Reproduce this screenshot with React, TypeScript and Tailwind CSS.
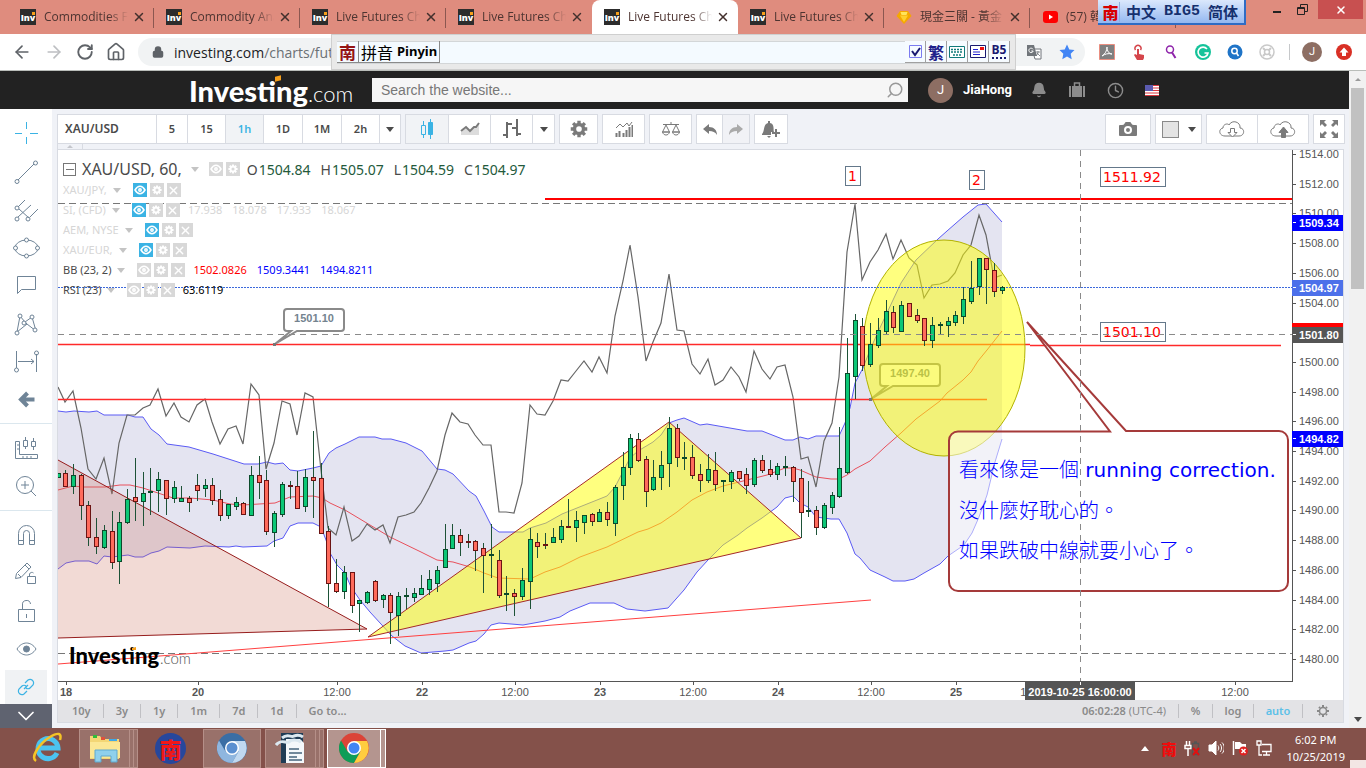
import type { ReactNode } from 'react';
import {
  ArrowLeft,
  ArrowRight,
  Bell,
  Camera,
  ChevronDown,
  Clock,
  House,
  Lock,
  RotateCw,
  Search,
  X,
} from 'lucide-react';

type Candle = [number, number, number, number, 0 | 1];

// high, body top, body bottom, low, 1 = up / 0 = down
const candles: Candle[] = [
  [473, 473, 477, 477, 1], [470, 473, 486, 486, 0], [464, 475, 486, 493, 1], [474, 475, 505, 519, 0],
  [501, 505, 537, 545, 0], [518, 537, 546, 553, 0], [525, 530, 547, 548, 1], [511, 531, 562, 568, 0],
  [512, 522, 561, 583, 1], [489, 499, 522, 523, 1], [458, 497, 501, 520, 0], [472, 493, 501, 525, 1],
  [468, 491, 492, 514, 1], [472, 479, 490, 511, 1], [480, 480, 498, 514, 0], [481, 487, 498, 502, 1],
  [486, 498, 501, 501, 1], [496, 498, 502, 511, 0], [474, 485, 490, 500, 0], [479, 485, 488, 496, 1],
  [478, 485, 500, 504, 0], [490, 499, 515, 520, 0], [504, 504, 515, 518, 1], [497, 502, 506, 509, 1],
  [502, 503, 514, 514, 0], [466, 475, 515, 515, 1], [456, 475, 482, 498, 0], [470, 480, 531, 534, 0],
  [511, 513, 532, 546, 1], [482, 484, 514, 516, 1], [481, 485, 486, 498, 0], [471, 486, 508, 508, 0],
  [469, 477, 506, 511, 1], [431, 477, 480, 517, 0], [463, 478, 533, 533, 0], [526, 531, 583, 606, 0],
  [559, 583, 591, 592, 0], [566, 572, 591, 598, 1], [572, 572, 605, 612, 0], [600, 600, 603, 631, 1],
  [591, 592, 602, 603, 1], [580, 581, 600, 601, 0], [594, 595, 599, 607, 1], [593, 595, 612, 643, 0],
  [592, 596, 615, 635, 1], [588, 595, 596, 608, 1], [588, 593, 597, 601, 1], [575, 588, 594, 594, 1],
  [570, 579, 589, 594, 1], [566, 570, 583, 591, 1], [524, 549, 567, 567, 1], [524, 535, 548, 548, 1],
  [529, 535, 542, 555, 0], [534, 541, 542, 547, 0], [540, 541, 550, 570, 0], [543, 548, 555, 592, 0],
  [524, 554, 555, 577, 1], [550, 560, 595, 597, 0], [576, 593, 594, 610, 1], [589, 593, 596, 615, 0],
  [568, 580, 596, 599, 1], [528, 539, 581, 608, 1], [533, 542, 546, 557, 0], [533, 544, 545, 548, 0],
  [528, 537, 542, 542, 1], [520, 526, 539, 542, 1], [499, 526, 527, 527, 0], [511, 520, 527, 541, 1],
  [515, 515, 522, 533, 1], [513, 514, 521, 525, 0], [509, 512, 521, 521, 1], [502, 512, 519, 525, 0],
  [485, 487, 523, 535, 1], [452, 467, 485, 499, 1], [434, 438, 467, 474, 1], [433, 439, 460, 461, 0],
  [456, 459, 491, 506, 0], [460, 477, 489, 490, 1], [451, 465, 477, 489, 1], [417, 428, 463, 486, 1],
  [424, 428, 457, 466, 0], [442, 457, 458, 469, 1], [445, 457, 475, 478, 0], [464, 474, 480, 491, 0],
  [454, 469, 480, 482, 1], [452, 470, 484, 490, 0], [480, 480, 481, 491, 1], [470, 472, 481, 488, 1],
  [471, 471, 478, 480, 0], [468, 474, 485, 493, 0], [458, 460, 484, 486, 1], [455, 460, 470, 472, 0],
  [460, 469, 474, 476, 0], [463, 466, 474, 479, 1], [456, 466, 467, 475, 1], [466, 467, 481, 501, 0],
  [469, 478, 512, 537, 0], [481, 510, 511, 516, 1], [506, 510, 527, 534, 0], [503, 505, 527, 528, 1],
  [492, 495, 507, 513, 1], [427, 468, 496, 497, 1], [338, 373, 472, 473, 1], [314, 320, 376, 398, 1],
  [318, 326, 365, 370, 0], [323, 344, 364, 366, 1], [318, 330, 345, 347, 1], [300, 311, 331, 333, 1],
  [306, 312, 327, 332, 0], [301, 305, 331, 331, 1], [303, 303, 316, 316, 0], [309, 315, 320, 322, 0],
  [318, 318, 340, 345, 0], [317, 325, 340, 347, 1], [322, 324, 325, 334, 1], [317, 321, 325, 336, 1],
  [311, 315, 322, 325, 1], [287, 299, 316, 323, 1], [261, 288, 301, 303, 1], [258, 258, 286, 294, 1],
  [258, 258, 269, 303, 0], [263, 270, 291, 296, 0], [286, 287, 290, 293, 1],
];

const rsi = [
  387, 402, 391, 428, 469, 479, 458, 494, 443, 415, 415, 408, 405, 389, 416, 403, 417, 422, 405, 399,
  422, 444, 429, 426, 444, 384, 395, 469, 443, 401, 404, 435, 393, 397, 470, 528, 535, 507, 541, 536,
  524, 530, 525, 543, 517, 515, 512, 503, 488, 471, 435, 413, 422, 424, 435, 445, 445, 512, 512, 513,
  483, 405, 414, 415, 401, 380, 381, 371, 361, 372, 357, 373, 316, 281, 245, 297, 361, 342, 323, 274,
  330, 331, 364, 374, 359, 385, 380, 367, 377, 392, 351, 369, 379, 367, 365, 397, 459, 457, 487, 441,
  423, 377, 252, 204, 280, 262, 250, 234, 259, 240, 258, 265, 298, 285, 284, 281, 273, 255, 245, 215,
  235, 278, 275,
];

const upperBand =
  '58,411 66,412 74,411 89,412 97,411 104,415 128,415 135,417 143,417 151,429 159,435 167,444 189,447 213,454 244,464 258,464 267,462 275,464 283,463 290,470 298,471 313,468 321,466 329,453 336,448 345,444 359,437 375,437 382,439 391,439 406,443 422,451 437,469 445,470 453,474 469,491 476,496 484,511 492,527 499,532 523,532 530,528 546,523 562,514 577,508 607,496 615,487 630,458 638,451 653,442 661,435 669,423 677,420 684,418 700,425 707,424 747,431 762,431 785,440 793,440 800,437 808,439 816,436 839,436 845,423 850,408 855,383 863,368 870,350 878,332 901,283 916,260 938,239 947,231 955,224 963,217 978,205 986,204 1002,222';
const lowerBand =
  '58,569 66,563 75,561 89,561 97,564 104,556 112,557 128,555 135,557 143,557 151,553 159,551 167,547 190,548 205,546 229,547 236,546 243,547 267,546 274,541 283,538 290,526 298,523 313,523 321,527 326,540 330,553 337,565 345,573 351,587 360,600 370,612 392,636 405,646 421,653 445,651 453,650 469,643 476,641 484,634 491,625 499,623 523,625 545,621 560,617 570,611 590,603 614,603 627,609 645,611 668,608 684,590 697,572 708,560 723,545 738,535 747,528 762,518 777,507 785,498 793,496 800,503 808,507 816,517 831,519 839,519 847,533 855,554 860,558 870,570 885,577 893,581 905,581 914,579 924,573 940,564 948,556 964,545 972,533 979,517 987,495 995,462 1002,439';
const middleBand =
  '58,490 73,486 83,487 105,487 120,485 130,485 143,488 158,493 173,498 190,498 213,500 230,504 243,505 275,503 290,497 313,496 322,498 330,503 345,510 370,525 390,537 421,552 437,560 453,562 470,567 484,573 498,578 530,579 545,572 560,567 570,562 580,557 607,547 638,532 648,529 661,523 677,512 692,500 707,492 723,486 747,480 767,475 785,468 793,468 800,470 816,477 831,479 839,479 847,475 855,469 870,461 885,447 901,433 916,419 940,401 947,393 963,380 971,372 978,361 987,350 1002,331';

const barX = (i: number) => Math.round(57.5 + 7.74 * i);

// 1502.00 is left out, the crosshair tag sits in its place
const priceTicks = Array.from({ length: 18 }, (_, i) => ({
  price: 1514 - i * 2,
  y: Math.round(154 + i * 29.7),
})).filter(({ price }) => price !== 1502);

const timeTicks: [number, string][] = [
  [66, '18'], [198, '20'], [337, '12:00'], [422, '22'], [515, '12:00'], [600, '23'], [693, '12:00'],
  [778, '24'], [871, '12:00'], [956, '25'], [1034, '12:00'], [1235, '12:00'],
];

const tabs = [
  { title: 'Commodities Fu', icon: 'inv' },
  { title: 'Commodity Ana', icon: 'inv' },
  { title: 'Live Futures Ch', icon: 'inv' },
  { title: 'Live Futures Ch', icon: 'inv' },
  { title: 'Live Futures Ch', icon: 'inv', active: true },
  { title: 'Live Futures Ch', icon: 'inv' },
  { title: '現金三關 - 黃金', icon: 'gem' },
  { title: '(57) 韓', icon: 'tube' },
];

const legendRows = [
  { name: 'XAU/JPY,', values: [] },
  { name: 'SI, (CFD)', values: ['17.938', '18.078', '17.933', '18.067'] },
  { name: 'AEM, NYSE', values: [] },
  { name: 'XAU/EUR,', values: [] },
];

function Caret({ className = 'text-[#4a4a4a]' }: { className?: string }) {
  return (
    <svg viewBox="0 0 8 5" className={`h-[5px] w-2 shrink-0 ${className}`} fill="currentColor">
      <path d="M0 0h8L4 5z" />
    </svg>
  );
}

function GearShape({ className }: { className: string }) {
  return (
    <svg viewBox="0 0 24 24" className={className} fill="none" stroke="currentColor">
      <circle cx="12" cy="12" r="6" strokeWidth="4.5" />
      <path
        strokeWidth="4.5"
        d="M12 1v4M12 19v4M1 12h4M19 12h4M4.200 4.200l2.900 2.900M16.900 16.900l2.900 2.900M4.200 19.800l2.900-2.900M16.900 7.100l2.900-2.900"
      />
    </svg>
  );
}

function TabIcon({ kind }: { kind: string }) {
  if (kind === 'gem') {
    return (
      <svg viewBox="0 0 16 16" className="size-4 shrink-0">
        <path d="M4 2h8l3.500 5L8 15 .5 7z" fill="#f5a800" />
        <path d="M4.500 3h7l-1 3h-5z" fill="#ffe45c" />
        <path d="M4 6.500h8L8 13z" fill="#ffd02e" />
      </svg>
    );
  }
  if (kind === 'tube') {
    return (
      <svg viewBox="0 0 16 16" className="size-4 shrink-0">
        <rect x="1" y="2" width="15" height="12" rx="3" fill="#f00" />
        <path d="M7 5.500v5l4-2.500z" fill="#fff" />
      </svg>
    );
  }
  return (
    <span className="relative flex size-4 shrink-0 items-center justify-center bg-[#2c2c2c] text-[9px] font-black leading-none text-white [font-family:'Open_Sans',sans-serif]">
      Inv
      <span className="absolute right-px top-[3px] size-[3px] bg-[#f7a01b]" />
    </span>
  );
}

function BrowserTabs() {
  return (
    <div className="flex h-[34px] items-stretch overflow-hidden bg-[#df8c7e] pl-2">
      {tabs.map((tab, index) => (
        <div
          key={index}
          className={`relative flex w-[146px] shrink-0 items-center pl-3 pr-[7px] ${
            tab.active ? 'rounded-t-lg bg-white' : ''
          }`}
        >
          <TabIcon kind={tab.icon} />
          <span className="ml-2 w-[86px] shrink-0 whitespace-nowrap text-[12px] text-[#4d3431] [font-family:'Open_Sans','Noto_Sans_CJK_TC',sans-serif] [mask-image:linear-gradient(to_right,black_75%,transparent_98%)]">
            {tab.title}
          </span>
          <button type="button" aria-label="Close tab" className="ml-[2px] shrink-0 text-[#43302d]">
            <X size={14} strokeWidth={2.500} />
          </button>
          {!tab.active && index !== 3 && (
            <span className="absolute right-0 top-2 h-5 w-px bg-[#8b5750]" />
          )}
        </div>
      ))}
      <div className="ml-auto flex items-start">
        <button type="button" aria-label="Minimize" className="mr-4 mt-[11px] h-[2px] w-2 bg-[#222]" />
        <button type="button" aria-label="Restore" className="mr-[10px] mt-1">
          <svg viewBox="0 0 11 11" className="size-[11px]" fill="none" stroke="#222">
            <path d="M3.500 3V.5h7v7H8" />
            <path d="M.5 3.500h7v7h-7zM.5 4.500h7" />
          </svg>
        </button>
        <button
          type="button"
          aria-label="Close"
          className="mr-[3px] flex h-[19px] w-[45px] items-center justify-center bg-[#c85050] text-white"
        >
          <X size={12} strokeWidth={3} />
        </button>
      </div>
    </div>
  );
}

function AddressBar() {
  return (
    <div className="flex h-[37px] items-center border-b border-[#b9bdb9] bg-white pl-3 pr-[14px] text-[#5f6368]">
      <div className="flex items-center gap-3">
        <button type="button" aria-label="Back"><ArrowLeft size={20} /></button>
        <button type="button" aria-label="Forward" className="text-[#bdbfc2]"><ArrowRight size={20} /></button>
        <button type="button" aria-label="Reload"><RotateCw size={18} strokeWidth={2.500} /></button>
        <button type="button" aria-label="Home"><House size={20} /></button>
      </div>
      <div className="ml-3 flex h-7 flex-1 items-center rounded-full bg-[#f1f3f4] pl-[14px] pr-[10px]">
        <Lock size={12} strokeWidth={3} fill="currentColor" />
        <span className="ml-[10px] flex-1 text-[14px] text-[#202124] [font-family:'Open_Sans',sans-serif]">
          investing.com<span className="text-[#6b7075]">/charts/futures-charts</span>
        </span>
        <svg viewBox="0 0 16 16" className="mr-[17px] size-4">
          <path d="M6 5h9v10H9z" fill="#fff" stroke="#70757a" />
          <path d="M1 1h7l3 11H1z" fill="#70757a" />
          <path d="M7 5.300A2.200 2.200 0 1 0 7.200 7H5.300" fill="none" stroke="#fff" />
          <path d="M10 8h4M12 7v1c0 2-1 3-2 4M11 9l3 3" fill="none" stroke="#70757a" strokeWidth=".8" />
        </svg>
        <svg viewBox="0 0 16 16" className="size-4">
          <path d="M8 .5l2.300 4.900 5.200.7-3.800 3.700 1 5.400L8 12.600l-4.700 2.600 1-5.400L.5 6.100l5.200-.7z" fill="#4285f4" />
        </svg>
      </div>
      <div className="ml-[14px] flex items-center gap-4">
        <svg viewBox="0 0 16 16" className="size-4">
          <path d="M.5.5h15v15H.5z" fill="#808080" stroke="#ea8e80" />
          <path d="M3 12c3-2 5-5 5-9 0 4 2 7 5 7-4-1-7 0-10 2z" fill="none" stroke="#fff" />
        </svg>
        <svg viewBox="0 0 16 16" className="size-4" fill="#d5454b">
          <path d="M6 5h2v5l5 1v3l-1 2H6l-3-5 1-1 2 1z" />
          <path d="M4.500 6a3 3 0 1 1 5 0" fill="none" stroke="#d5454b" strokeWidth="1.500" />
        </svg>
        <svg viewBox="0 0 16 16" className="size-4" fill="none" stroke="#8e24aa" strokeWidth="1.500">
          <circle cx="7" cy="5.500" r="3.500" />
          <path d="M9 8.500l3.500 5.500" strokeWidth="2" />
        </svg>
        <svg viewBox="0 0 16 16" className="size-4">
          <circle cx="8" cy="8" r="8" fill="#15c39a" />
          <path d="M12 5a5 5 0 1 0 1 4H9.500" fill="none" stroke="#fff" strokeWidth="1.600" />
        </svg>
        <svg viewBox="0 0 16 16" className="size-4">
          <circle cx="8" cy="8" r="7.500" fill="#1f74c7" />
          <circle cx="7.500" cy="7" r="2.700" fill="none" stroke="#fff" strokeWidth="1.500" />
          <path d="M9.500 9l2 3" stroke="#fff" strokeWidth="1.500" />
        </svg>
        <svg viewBox="0 0 16 16" className="size-4" fill="none" stroke="#c9c9c9">
          <circle cx="8" cy="8" r="7" strokeWidth="1.500" />
          <path d="M4 4l8 8M12 4l-8 8" strokeWidth="2" />
          <circle cx="8" cy="8" r="2.500" fill="#fff" strokeWidth="1.500" />
        </svg>
      </div>
      <span className="ml-[14px] h-4 w-px bg-[#c6c8ca]" />
      <span className="ml-3 flex size-5 items-center justify-center rounded-full bg-[#8d6e63] text-[11px] text-white [font-family:Roboto,sans-serif]">
        J
      </span>
      <svg viewBox="0 0 16 16" className="ml-[14px] size-4">
        <circle cx="8" cy="8" r="8" fill="#d93025" />
        <path d="M8 3.500l4.500 5H10V12H6V8.500H3.500z" fill="#fff" />
      </svg>
    </div>
  );
}

// Floating input method bars that sit above the browser window
function InputMethodBars() {
  const keyClass =
    'flex h-[22px] w-[21px] items-center justify-center border-b border-r border-[#a0a0a0] bg-[#f6fbff]';
  return (
    <>
      <div className="absolute left-[331px] right-[350px] top-[34px] z-10 flex h-9 items-center border border-[#cfcfcf] bg-[#e9e9e9] px-[5px]">
        <div className="flex h-[23px] flex-1 items-center border-y border-[#d3d6d8] bg-[#f4faff]">
          <span className="flex size-[22px] items-center justify-center border-b border-r border-[#8a8a8a] text-[17px] font-bold leading-none text-[#941414] [font-family:'Noto_Sans_CJK_TC',sans-serif]">
            南
          </span>
          <span className="flex h-[22px] items-center gap-1 border-b border-r border-[#8a8a8a] px-[2px] text-[16px] leading-none text-black [font-family:'Noto_Sans_CJK_SC',sans-serif]">
            拼音
            <b className="text-[13px] [font-family:'Noto_Sans',sans-serif]">Pinyin</b>
          </span>
          <div className="ml-auto flex">
            <button type="button" aria-label="Enable" className={keyClass}>
              <svg viewBox="0 0 13 13" className="size-[13px]" fill="none">
                <path d="M.5.5h12v12H.5z" stroke="#7b7bf0" />
                <path d="M3 6l3 4 5-7" stroke="#191970" strokeWidth="2" />
              </svg>
            </button>
            <button type="button" className={`${keyClass} text-[16px] font-bold leading-none text-[#20208a] [font-family:'Noto_Sans_CJK_TC',sans-serif]`}>
              繁
            </button>
            <button type="button" aria-label="Keyboard" className={keyClass}>
              <svg viewBox="0 0 16 12" className="h-3 w-4">
                <path d="M.5.5h15v11H.5z" fill="#fff" stroke="#117a7a" />
                <path d="M2 3.500h12M2 6h12M4 9h8" stroke="#117a7a" strokeWidth="1.500" strokeDasharray="2 1" />
              </svg>
            </button>
            <button type="button" aria-label="Mail" className={keyClass}>
              <svg viewBox="0 0 16 14" className="h-[14px] w-4">
                <path d="M.5.5h15v12H.5z" fill="#fff" stroke="#191970" />
                <path d="M3 4.500h5M3 7h7M3 9.500h7" stroke="#2323d0" />
                <path d="M10 2h4v3h-4z" fill="#e11" />
              </svg>
            </button>
            <button type="button" className={`${keyClass} flex-col text-[12px] font-bold leading-none text-[#191970] [font-family:'Open_Sans',sans-serif]`}>
              B5
              <span className="mt-px w-[14px] border-b-2 border-dotted border-[#191970]" />
            </button>
          </div>
        </div>
      </div>
      <div className="absolute right-[120px] top-0 z-10 flex h-[25px] w-[148px] items-center border-b-2 border-r-2 border-[#2f6cc4] bg-linear-to-b from-[#dbe8fc] to-[#94b8f0] pl-1">
        <span className="flex w-[18px] justify-center border-r border-[#8fb0e0] text-[16px] font-black leading-5 text-[#d80000] [font-family:'Noto_Sans_CJK_TC',sans-serif]">
          南
        </span>
        <span className="flex flex-1 items-center justify-center gap-2 text-[15px] font-bold leading-none text-[#16306e] [font-family:'Noto_Sans_CJK_SC',sans-serif]">
          <span>中文</span>
          <span className="[font-family:'Liberation_Mono',monospace]">BIG5</span>
          <span>简体</span>
        </span>
      </div>
    </>
  );
}

function SiteHeader() {
  return (
    <header className="flex h-[38px] items-center bg-[#222] pl-[189px] text-white">
      <a href="#" className="relative flex w-[183px] items-baseline leading-none">
        <span className="text-[29px] font-black [font-family:Lato,sans-serif]">Investing</span>
        <span className="text-[22px] font-light [font-family:Lato,sans-serif]">.com</span>
        <span className="absolute left-[86px] top-0 h-[5px] w-[6px] -skew-y-12 bg-[#f7a01b]" />
      </a>
      <div className="flex h-6 flex-1 items-center bg-[#f6f6f6] pl-[9px] pr-1">
        <input
          type="text"
          aria-label="Search the website"
          placeholder="Search the website..."
          className="h-6 min-w-0 flex-1 bg-transparent text-[14px] text-[#333] outline-none [font-family:'Liberation_Sans',sans-serif] placeholder:text-[#777]"
        />
        <Search size={18} className="-scale-x-100 text-[#999]" />
      </div>
      <div className="flex w-[441px] shrink-0 items-center pl-5">
        <span className="flex size-[25px] items-center justify-center rounded-full bg-[#8d6e63] text-[13px] [font-family:Roboto,sans-serif]">
          J
        </span>
        <a href="#" className="ml-[10px] w-[68px] text-[13px] font-bold [font-family:Roboto,sans-serif]">
          JiaHong
        </a>
        <button type="button" aria-label="Alerts" className="text-[#8c8c8c]">
          <Bell size={16} fill="currentColor" />
        </button>
        <button type="button" aria-label="Portfolio" className="ml-[21px]">
          <svg viewBox="0 0 18 16" className="h-4 w-[18px]" fill="#8c8c8c">
            <path d="M1 4h2v11H1zM15 4h2v11h-2zM4 4h10v11H4z" />
            <path d="M6.500 4V1h5v3" fill="none" stroke="#8c8c8c" strokeWidth="1.500" />
          </svg>
        </button>
        <button type="button" aria-label="History" className="ml-[21px] text-[#8c8c8c]">
          <Clock size={17} />
        </button>
        <svg viewBox="0 0 14 11" className="ml-[21px] h-[11px] w-[14px]">
          <path d="M0 0h14v11H0z" fill="#fff" />
          <path d="M0 .5h14M0 3h14M0 5.500h14M0 8h14M0 10.500h14" stroke="#d9363e" strokeWidth="1.200" />
          <path d="M0 0h8v6H0z" fill="#5b5bb0" />
        </svg>
      </div>
    </header>
  );
}

const drawTools: { label: string; art: ReactNode }[] = [
  { label: 'Crosshair', art: <path stroke="#3bb3e4" d="M13.500 2v7M13.500 17v7M2 13.500h7M17 13.500h8" /> },
  {
    label: 'Trend line',
    art: (<><path d="M5 22L21 6" /><circle cx="4" cy="23.500" r="2" /><circle cx="22.500" cy="5" r="2" /></>),
  },
  {
    label: 'Pitchfork',
    art: (
      <>
        <path d="M5 11l7-7M6 13l10 9M5 21L18 9M17 21l8-8" />
        <circle cx="4" cy="12" r="2" /><circle cx="4" cy="23" r="2" /><circle cx="15" cy="23" r="2" />
      </>
    ),
  },
  {
    label: 'Ellipse',
    art: (
      <>
        <ellipse cx="13.500" cy="14" rx="11.500" ry="8" />
        <g fill="#fff">
          <circle cx="2.500" cy="14" r="2" /><circle cx="24.500" cy="14" r="2" />
          <circle cx="13.500" cy="6" r="2" /><circle cx="13.500" cy="22" r="2" />
        </g>
      </>
    ),
  },
  { label: 'Callout', art: <path d="M4.500 4.500h18v13h-14l-4 4z" /> },
  {
    label: 'Pattern',
    art: (
      <>
        <path d="M4 22L7 6l5 6 7-5 4 14-9-7zM12 12l2 2" />
        <g fill="#fff">
          <circle cx="4" cy="23" r="2" /><circle cx="7" cy="6" r="2" /><circle cx="11" cy="13" r="2" />
          <circle cx="19" cy="7" r="2" /><circle cx="22" cy="20" r="2" />
        </g>
      </>
    ),
  },
  {
    label: 'Forecast',
    art: (
      <>
        <path d="M3.500 3v17M23.500 6v18M5 13.500h16M18 11l3 2.500-3 2.500" />
        <circle cx="3.500" cy="22" r="2" /><circle cx="23.500" cy="5" r="2" />
      </>
    ),
  },
  {
    label: 'Back',
    art: <path d="M14.500 7L8 13.500l6.500 6.500M9 13.500h12.500" stroke="#6f8497" strokeWidth="4" />,
  },
];

const viewTools: { label: string; art: ReactNode }[] = [
  {
    label: 'Measure',
    art: <path d="M2.500 6.500h4v13h18v4h-22zM4 10h2M4 14h2M10 21v2M14 21v2M18 21v2M12.500 2v3M12.500 12v2M10.500 5.500h4v6h-4zM20.500 3v3M20.500 12v3M18.500 6.500h4v5h-4z" />,
  },
  {
    label: 'Zoom in',
    art: (<><circle cx="12" cy="12" r="8.500" /><path d="M18 18l5 5M8 12h8M12 8v8" /></>),
  },
];

const lockTools: { label: string; art: ReactNode }[] = [
  {
    label: 'Magnet',
    art: <path d="M5.500 22.500v-11a8 8 0 0 1 16 0v11h-5v-11a3 3 0 0 0-6 0v11zM5.500 18.500h5M16.500 18.500h5" />,
  },
  {
    label: 'Stay in drawing mode',
    art: <path d="M2.500 18.500l1-5L14 3l4 4L8 17.500zM5 14l3 3M12 5l4 4M14.500 16.500h8v7h-8zM16.500 16v-2a2.500 2.500 0 0 1 4-1" />,
  },
  {
    label: 'Lock all',
    art: <path d="M5.500 11.500h16v12h-16zM9.500 11V7a4 4 0 0 1 8-1M13.500 16v4" />,
  },
  {
    label: 'Hide all',
    art: (<><path d="M4 13c5-8 14-8 19 0-5 8-14 8-19 0z" /><circle cx="13.500" cy="13" r="3" fill="#6f8497" /></>),
  },
];

function ToolButton({ label, art }: { label: string; art: ReactNode }) {
  return (
    <button type="button" aria-label={label} className="flex h-[38px] w-full items-center justify-center">
      <svg viewBox="0 0 27 27" className="size-[27px]" fill="none" stroke="#6f8497">
        {art}
      </svg>
    </button>
  );
}

function DrawingToolbar() {
  return (
    <aside className="flex w-[52px] shrink-0 flex-col bg-white pt-[5px]">
      {drawTools.map((tool) => <ToolButton key={tool.label} {...tool} />)}
      <hr className="my-[5px] border-[#dbe7ee]" />
      {viewTools.map((tool) => <ToolButton key={tool.label} {...tool} />)}
      <hr className="my-[5px] border-[#dbe7ee]" />
      {lockTools.map((tool) => <ToolButton key={tool.label} {...tool} />)}
      <button
        type="button"
        aria-label="Sync drawings"
        className="mx-[5px] mt-[2px] flex h-[34px] items-center justify-center bg-[#f0f2f4]"
      >
        <svg viewBox="0 0 18 18" className="size-[18px]" fill="none" stroke="#3bb3e4" strokeWidth="1.200">
          <path d="M7 11l4-4M8 5l3-3c3-2 7 1 5 5l-3 3c-1 1-3 1-4 0M10 13l-3 3c-3 2-7-1-5-5l3-3c1-1 3-1 4 0" />
        </svg>
      </button>
      <button type="button" aria-label="More tools" className="flex h-6 items-center justify-center bg-[#5f6370] text-white">
        <ChevronDown size={28} strokeWidth={1.500} />
      </button>
    </aside>
  );
}

function ToolGroup({ children }: { children: ReactNode }) {
  return <div className="flex h-[30px] divide-x divide-[#d8dbe2] border border-[#d8dbe2] bg-white">{children}</div>;
}

const cell = 'flex items-center justify-center text-[#7a7a7a]';

const intervals = [
  { label: '5', width: 'w-[31px]' },
  { label: '15', width: 'w-[38px]' },
  { label: '1h', width: 'w-[38px]' },
  { label: '1D', width: 'w-[39px]' },
  { label: '1M', width: 'w-[39px]' },
  { label: '2h', width: 'w-[38px]' },
];

function ChartToolbar() {
  return (
    <div className="flex h-[35px] gap-1 pr-1 pt-[5px] [font-family:'Noto_Sans',sans-serif]">
      <ToolGroup>
        <button type="button" className="w-[99px] pl-[7px] text-left text-[12px] font-semibold text-[#4a4a4a]">
          XAU/USD
        </button>
        {intervals.map(({ label, width }) => (
          <button
            key={label}
            type="button"
            className={`${width} text-[11px] font-semibold ${
              label === '1h' ? 'bg-[#f1f3f6] text-[#3bb3e4]' : 'text-[#4a4a4a]'
            }`}
          >
            {label}
          </button>
        ))}
        <button type="button" aria-label="Intervals" className={`${cell} w-5`}><Caret /></button>
      </ToolGroup>
      <ToolGroup>
        <button type="button" aria-label="Candles" className={`${cell} w-[43px] bg-[#f1f3f6]`}>
          <svg viewBox="0 0 14 20" className="h-5 w-[14px]" fill="none" stroke="#3bb3e4">
            <path d="M3.500 2v4M3.500 16v3M1.500 6.500h4v9h-4z" />
            <path d="M10.500 0v20M8.500 3.500h4v12h-4z" fill="#3bb3e4" />
          </svg>
        </button>
        <button type="button" aria-label="Area" className={`${cell} w-[42px]`}>
          <svg viewBox="0 0 20 14" className="h-[14px] w-5">
            <path d="M1 10l5-4 4 4 9-8v11H1z" fill="#dcdcdc" />
            <path d="M1 9l5-4 4 4 4-4h2l3-4" fill="none" stroke="#7a7a7a" strokeWidth="2" />
          </svg>
        </button>
        <button type="button" aria-label="Bars" className={`${cell} w-[42px]`}>
          <svg viewBox="0 0 18 20" className="h-5 w-[18px]" fill="none" stroke="#6a6a6a" strokeWidth="2">
            <path d="M4 3v16M0 16h4M4 5h5M14 0v17M9 9h5M14 15h4" />
          </svg>
        </button>
        <button type="button" aria-label="Chart types" className={`${cell} w-[21px]`}><Caret /></button>
      </ToolGroup>
      <ToolGroup>
        <button type="button" aria-label="Settings" className={`${cell} w-[37px]`}><GearShape className="size-[18px]" /></button>
      </ToolGroup>
      <ToolGroup>
        <button type="button" aria-label="Indicators" className={`${cell} w-[41px]`}>
          <svg viewBox="0 0 18 16" className="h-4 w-[18px]" fill="none" stroke="currentColor">
            <path d="M1.500 12v4M4.500 10v6M8.500 12v4M11.500 9v7M14.500 6v10M17.500 4v12" strokeWidth="2" />
            <path d="M1 7l4-4 3 3 4-4 2 3 3-4" />
          </svg>
        </button>
      </ToolGroup>
      <ToolGroup>
        <button type="button" aria-label="Compare" className={`${cell} w-[41px]`}>
          <svg viewBox="0 0 18 15" className="h-[15px] w-[18px]" fill="none" stroke="currentColor">
            <path d="M1 2.500h16M4 3l-3.500 7h7zM14 3l-3.500 7h7zM9 0v3" />
            <path d="M.5 10c1 4 6 4 7 0zM10.500 10c1 4 6 4 7 0z" />
          </svg>
        </button>
      </ToolGroup>
      <ToolGroup>
        <button type="button" aria-label="Undo" className={`${cell} w-[26px]`}>
          <svg viewBox="0 0 14 11" className="h-[11px] w-[14px]" fill="currentColor"><path d="M0 5l6-5v3c5 0 8 3 8 8-2-3-4-4-8-4v3z" /></svg>
        </button>
        <button type="button" aria-label="Redo" className={`${cell} w-[26px] bg-[#f1f2f6]`}>
          <svg viewBox="0 0 14 11" className="h-[11px] w-[14px]" fill="#aaa"><path d="M14 5L8 0v3C3 3 0 6 0 11c2-3 4-4 8-4v3z" /></svg>
        </button>
      </ToolGroup>
      <ToolGroup>
        <button type="button" aria-label="Add alert" className={`${cell} w-8`}>
          <svg viewBox="0 0 18 17" className="h-[17px] w-[18px]" fill="currentColor">
            <path d="M0 13c3-3 1-10 6-11V0h2v2c5 1 3 7 4 9H9v3H0zM5 15h4l-2 2z" />
            <path d="M14 8v8M10 12h8" stroke="currentColor" strokeWidth="2" />
          </svg>
        </button>
      </ToolGroup>
      <div className="ml-auto flex gap-1">
        <ToolGroup>
          <button type="button" aria-label="Snapshot" className={`${cell} w-11`}>
            <Camera size={24} fill="currentColor" stroke="#fff" />
          </button>
        </ToolGroup>
        <ToolGroup>
          <button type="button" aria-label="Background" className={`${cell} w-[45px] gap-[9px]`}>
            <span className="size-[17px] border border-[#8a8a8a] bg-[#e4e4e4]" />
            <Caret />
          </button>
        </ToolGroup>
        <ToolGroup>
          <button type="button" aria-label="Load" className={`${cell} w-[51px]`}>
            <svg viewBox="0 0 26 18" className="h-[18px] w-[26px]" fill="#fff" stroke="#7a7a7a">
              <path d="M6 16C0 16-1 9 4 8c0-4 5-5 6-3 3-6 12-3 11 3 5 0 5 8-1 8z" />
              <path d="M11.500 8.500h4v4h2.500L13.500 17 9 12.500h2.500z" />
            </svg>
          </button>
          <button type="button" aria-label="Save" className={`${cell} w-[50px]`}>
            <svg viewBox="0 0 26 18" className="h-[18px] w-[26px]" fill="#fff" stroke="#7a7a7a">
              <path d="M6 16C0 16-1 9 4 8c0-4 5-5 6-3 3-6 12-3 11 3 5 0 5 8-1 8z" />
              <path d="M11.500 17.500h4v-5H18L13.500 7 9 12.500h2.500z" fill="#7a7a7a" />
            </svg>
          </button>
        </ToolGroup>
        <ToolGroup>
          <button type="button" aria-label="Full screen" className={`${cell} w-[30px]`}>
            <svg viewBox="0 0 18 18" className="size-[18px]" fill="currentColor">
              <path d="M0 0h6L4 2l3 3-2 2-3-3-2 2zM18 0v6l-2-2-3 3-2-2 3-3-2-2zM0 18v-6l2 2 3-3 2 2-3 3 2 2zM18 18h-6l2-2-3-3 2-2 3 3 2-2z" />
            </svg>
          </button>
        </ToolGroup>
      </div>
    </div>
  );
}

function Callout({ x, y, text }: { x: number; y: number; text: string }) {
  return (
    <g>
      <path
        d={`M${x + 14} ${y + 22}h44a3 3 0 0 0 3-3v-16a3 3 0 0 0-3-3h-54a3 3 0 0 0-3 3v16a3 3 0 0 0 3 3h4l-16 13z`}
        fill="#fff"
        fillOpacity=".7"
        stroke="#8a8a8a"
        strokeWidth="2"
      />
      <path d={`M${x - 10} ${y + 34}h3v3h-3z`} fill="#777" />
      <text x={x + 31} y={y + 13} textAnchor="middle" fontWeight="bold" fill="#74838f">{text}</text>
    </g>
  );
}

function PriceTag({ y, fill, text }: { y: number; fill: string; text: string }) {
  return (
    <g>
      <rect x="1292" y={y} width="51" height="16" fill={fill} />
      <path d={`M1293 ${y + 7}.5h3`} stroke="#fff" />
      <text x="1299" y={y + 12} fontWeight="bold" fill="#fff">{text}</text>
    </g>
  );
}

function Note({ x, y, width, text }: { x: number; y: number; width: number; text: string }) {
  return (
    <g>
      <rect x={x + 0.5} y={y + 0.5} width={width} height="19" fill="#fff" fillOpacity=".6" stroke="#64788a" />
      <text x={x + 3} y={y + 15} fontSize="14" fill="#f00" className="[font-family:'DejaVu_Sans',sans-serif]">
        {text}
      </text>
    </g>
  );
}

function PriceChart() {
  return (
    <svg
      viewBox="58 150 1285 550"
      className="block w-full bg-white text-[11px] [font-family:'Liberation_Sans',sans-serif]"
      fill="none"
    >
      {/* Bollinger bands */}
      <polygon
        points={`${upperBand} ${lowerBand.split(' ').reverse().join(' ')}`}
        fill="#e4e4f1"
      />
      <polyline points={upperBand} stroke="#5a5af5" />
      <polyline points={lowerBand} stroke="#5a5af5" />
      <polyline points={middleBand} stroke="#e8505c" />
      <polyline points={rsi.map((y, i) => `${barX(i)},${y}`).join(' ')} stroke="#666" strokeWidth="1.200" />

      {/* Horizontal levels */}
      <path d="M58 344.500H1030" stroke="#ff2a2a" strokeWidth="1.400" />
      <path d="M1030 345.500H1281" stroke="#ff2a2a" strokeWidth="1.400" />
      <path d="M58 399.500H987" stroke="#ff2a2a" strokeWidth="1.400" />
      <path d="M545 199H1292" stroke="#f00" strokeWidth="2" />
      <path d="M58 203.500H1292M58 653.500H1292" stroke="#777" strokeDasharray="7 4" />
      <path d="M58 664L871 600" stroke="#ff4040" />
      <Callout x={283} y={309} text="1501.10" />
      <Callout x={879} y={364} text="1497.40" />

      {/* Drawn shapes */}
      <path d="M58 460L367 629L58 638" fill="#cb6b57" fillOpacity=".25" />
      <path d="M58 460L367 629L58 638" stroke="#961c1c" />
      <path d="M368 637L669 422L801 538z" fill="#ff0" fillOpacity=".5" stroke="#a52a2a" />
      <ellipse cx="944" cy="348" rx="81" ry="108" fill="#ff0" fillOpacity=".5" stroke="#b2b200" />
      <path d="M58 287.500H1292" stroke="#3c69dc" strokeDasharray="2 1" />

      {/* Candles */}
      <g shapeRendering="crispEdges">
        {candles.map(([high, top, bottom, low, up], i) => {
          const x = barX(i);
          return (
            <g key={i}>
              <path d={`M${x + 0.5} ${high}V${low + 1}`} stroke="#1d5237" />
              <rect x={x - 2} y={top} width="5" height={bottom - top + 1} fill={up ? '#0b4a2b' : '#6b1313'} />
              {bottom - top > 1 && (
                <rect x={x - 1} y={top + 1} width="3" height={bottom - top - 1} fill={up ? '#0cc776' : '#ff6b5c'} />
              )}
            </g>
          );
        })}
      </g>

      {/* Comment bubble */}
      <path
        d="M1110 431.500H958a9 9 0 0 0-9 9V582a9 9 0 0 0 9 9H1279a9 9 0 0 0 9-9V440a9 9 0 0 0-9-9H1126L1027 322z"
        fill="#fff"
        fillOpacity=".5"
        stroke="#a53a3a"
        strokeWidth="2"
      />
      <g fontSize="20" fill="#00f" className="[font-family:'DejaVu_Sans','Noto_Sans_CJK_TC',sans-serif]">
        <text x="959" y="477">
          <tspan className="font-light [font-family:'Noto_Sans_CJK_TC',sans-serif]">看來像是一個</tspan> running correction.
        </text>
        <text x="959" y="518" className="font-light [font-family:'Noto_Sans_CJK_TC',sans-serif]">沒什麼好耽心的。</text>
        <text x="959" y="558" className="font-light [font-family:'Noto_Sans_CJK_TC',sans-serif]">如果跌破中線就要小心了。</text>
      </g>
      <Note x={845} y={166} width={15} text="1" />
      <Note x={969} y={170} width={15} text="2" />
      <Note x={1100} y={167} width={65} text="1511.92" />
      <Note x={1100} y={322} width={65} text="1501.10" />

      {/* Crosshair */}
      <path d="M58 334.500H1292M1080.500 150V681" stroke="#8a8a8a" strokeDasharray="6 5" />

      {/* Price axis */}
      <path d="M1292.500 150V681.500M58 681.500H1293" stroke="#555" />
      {priceTicks.map(({ price, y }) => (
        <g key={price}>
          <path d={`M1293 ${y}.5h3`} stroke="#555" />
          <text x="1299" y={y + 4} fill="#555">{price}.00</text>
        </g>
      ))}
      <PriceTag y={215} fill="#00f" text="1509.34" />
      <PriceTag y={280} fill="#4c70ea" text="1504.97" />
      <rect x="1292" y="323" width="51" height="5" fill="#f00" />
      <PriceTag y={327} fill="#555" text="1501.80" />
      <PriceTag y={431} fill="#00f" text="1494.82" />

      {/* Time axis */}
      {timeTicks.map(([x, label]) => (
        <g key={x}>
          <path d={`M${x}.5 682v3`} stroke="#555" />
          <text x={x} y="696" textAnchor="middle" fill="#555" fontWeight={label.length === 2 ? 'bold' : 'normal'}>
            {label}
          </text>
        </g>
      ))}
      <rect x="1025" y="682" width="110" height="18" fill="#555" />
      <path d="M1080.500 682v3" stroke="#fff" />
      <text x="1080" y="696" textAnchor="middle" fontWeight="bold" fill="#fff">2019-10-25 16:00:00</text>

      {/* Watermark */}
      <g fill="#000" className="[font-family:Lato,sans-serif]">
        <text x="69" y="664" fontSize="22" fontWeight="900">Investing</text>
        <text x="160" y="664" fontSize="15" fill="#555" fontWeight="300">.com</text>
      </g>
      <path d="M132 648l4-1v3h-4z" fill="#f7a01b" />
    </svg>
  );
}

function LegendButtons({ active = false, closable = true }: { active?: boolean; closable?: boolean }) {
  const box = 'flex size-[14px] items-center justify-center text-white';
  return (
    <span className="flex gap-[3px]">
      <button type="button" aria-label="Toggle" className={`${box} ${active ? 'bg-[#3bb3e4]' : 'bg-[#d8d8d8]'}`}>
        <svg viewBox="0 0 12 10" className="h-[10px] w-3" fill="none" stroke="#fff" strokeWidth="1.500">
          <path d="M1 5c3-5 7-5 10 0-3 5-7 5-10 0z" />
          <circle cx="6" cy="5" r="1.200" />
        </svg>
      </button>
      <button type="button" aria-label="Format" className={`${box} bg-[#d8d8d8]`}>
        <GearShape className="size-[10px]" />
      </button>
      {closable && (
        <button type="button" aria-label="Remove" className={`${box} bg-[#d8d8d8]`}><X size={13} strokeWidth={2.500} /></button>
      )}
    </span>
  );
}

function ChartLegend() {
  return (
    <div className="absolute left-[5px] top-2 text-[11px] text-[#4a4a4a] [font-family:'Noto_Sans',sans-serif]">
      <div className="flex h-[22px] items-center text-[14px]">
        <span className="mr-[6px] flex size-[13px] items-center justify-center border border-[#777]">
          <span className="h-px w-2 bg-[#777]" />
        </span>
        <span className="mr-[9px] text-[16px]">XAU/USD, 60,</span>
        <Caret className="mr-[10px] text-[#c4c4c4]" />
        <LegendButtons closable={false} />
        <span className="ml-[7px] flex gap-[10px]">
          {[['O', '1504.84'], ['H', '1505.07'], ['L', '1504.59'], ['C', '1504.97']].map(([key, value]) => (
            <span key={key}>{key}<span className="ml-px text-[#245a3c]">{value}</span></span>
          ))}
        </span>
      </div>
      {legendRows.map((row) => (
        <div key={row.name} className="flex h-5 items-center text-[#d6d6d6]">
          <span className="mr-[6px]">{row.name}</span>
          <Caret className="mr-3 text-[#c4c4c4]" />
          <LegendButtons active />
          <span className="ml-2 flex gap-[10px]">
            {row.values.map((value) => <span key={value}>{value}</span>)}
          </span>
        </div>
      ))}
      <div className="flex h-5 items-center">
        <span className="mr-[6px]">BB (23, 2)</span>
        <Caret className="mr-3 text-[#c4c4c4]" />
        <LegendButtons />
        <span className="ml-2 flex gap-[10px] text-[#00f]">
          <span className="text-[#f00]">1502.0826</span>
          <span>1509.3441</span>
          <span>1494.8211</span>
        </span>
      </div>
      <div className="flex h-5 items-center">
        <span className="mr-[5px]">RSI (23)</span>
        <Caret className="mr-3 text-[#c4c4c4]" />
        <LegendButtons />
        <span className="ml-2 text-black">63.6119</span>
      </div>
    </div>
  );
}

function RangeBar() {
  const divider = <span className="h-[14px] w-px bg-[#c0c0c4]" />;
  return (
    <div className="flex h-[23px] items-center border-b border-[#d8dbe2] bg-[#e3e3e6] pl-[2px] text-[11px] font-semibold text-[#8a8a8a] [font-family:'Noto_Sans',sans-serif]">
      {['10y', '3y', '1y', '1m', '7d', '1d'].map((range) => (
        <span key={range} className="contents">
          <button type="button" className="px-3">{range}</button>
          {divider}
        </span>
      ))}
      <button type="button" className="px-3">Go to...</button>
      <span className="ml-auto mr-3">06:02:28 <span className="font-normal">(UTC-4)</span></span>
      {divider}
      <button type="button" className="w-[33px]">%</button>
      {divider}
      <button type="button" className="w-10">log</button>
      {divider}
      <button type="button" className="w-12 text-[#5cc0e8]">auto</button>
      {divider}
      <button type="button" aria-label="Scale settings" className="flex w-10 justify-center">
        <svg viewBox="0 0 12 12" className="size-3" fill="none" stroke="#888">
          <circle cx="6" cy="6" r="3.500" strokeWidth="1.500" />
          <path strokeWidth="2" d="M6 0v2M6 10v2M0 6h2M10 6h2M2 2l1 1M9 9l1 1M2 10l1-1M9 3l1-1" />
        </svg>
      </button>
    </div>
  );
}

function ChromeLogo({ colors }: { colors: [string, string, string, string] }) {
  return (
    <svg viewBox="0 0 30 30" className="size-[30px]">
      <circle cx="15" cy="15" r="15" fill={colors[0]} />
      <path d="M2 7.500A15 15 0 0 0 15 30l6.500-11.500h-13z" fill={colors[1]} />
      <path d="M28 8H15l6.500 10.500L15 30A15 15 0 0 0 28 8z" fill={colors[2]} />
      <circle cx="15" cy="15" r="7" fill="#fff" />
      <circle cx="15" cy="15" r="5.500" fill={colors[3]} />
    </svg>
  );
}

function Taskbar() {
  const task = 'flex h-[39px] items-center justify-center border';
  return (
    <footer className="relative flex h-10 items-center bg-[#84514a] pl-[15px] pr-[21px] text-white">
      <button type="button" aria-label="Internet Explorer" className="flex w-16 justify-center">
        <svg viewBox="0 0 32 32" className="size-8" fill="none">
          <path d="M26 21A10 10 0 1 1 27 16H8" stroke="#4cc3f0" strokeWidth="5" />
          <path d="M5 29c-6-4 4-18 14-24 8-5 12-4 10 3" stroke="#f5c326" strokeWidth="2.500" />
        </svg>
      </button>
      <button type="button" aria-label="File Explorer" className={`${task} w-[51px] border-[#b58f88] bg-[#99716a]`}>
        <svg viewBox="0 0 32 30" className="h-[30px] w-8">
          <path d="M1 3h10l2 3h17v20H1z" fill="#f3d675" />
          <path d="M4 2h4v3H4z" fill="#2ebd3a" /><path d="M12 4h4v3h-4z" fill="#e0523a" /><path d="M20 6h8v2h-8z" fill="#3fa9e8" />
          <path d="M1 9h30v16H1z" fill="#fbe795" />
          <path d="M6 29V17h22v12h-6v-6H12v6z" fill="#8fd0ec" stroke="#5fa9cf" />
        </svg>
      </button>
      <span className="h-[39px] w-[4px] border border-l-0 border-[#b58f88] bg-[#99716a]" />
      <span className="h-[39px] w-[4px] border border-l-0 border-[#b58f88] bg-[#99716a]" />
      <button type="button" className="ml-[17px] flex size-[31px] items-center justify-center rounded-full bg-[#27479c] text-[22px] font-black leading-none text-[#f01818] [font-family:'Noto_Sans_CJK_TC',sans-serif]">
        南
      </button>
      <button type="button" aria-label="Chromium" className={`${task} ml-[17px] w-[58px] border-[#b58f88] bg-[#99716a]`}>
        <ChromeLogo colors={['#3a6ea5', '#8fb6df', '#c0d8f0', '#5a8fd0']} />
      </button>
      <button type="button" aria-label="OpenOffice Writer" className={`${task} ml-1 w-[51px] border-[#b58f88] bg-[#99716a]`}>
        <svg viewBox="0 0 32 32" className="size-8">
          <path d="M6 1h22v30H6z" fill="#1f3c55" />
          <path d="M11 7h14l4 4v20H11z" fill="#f4f8fb" />
          <path d="M14 17h10M14 21h13M14 25h8M14 28h13" stroke="#44637c" strokeWidth="1.500" />
          <path d="M1 13c6-7 10-1 13-3 3-3 9-2 12 0M7 6c6-5 9 0 12-2 3-1 6-1 9 1" fill="none" stroke="#dbe8f0" strokeWidth="3" />
        </svg>
      </button>
      <span className="h-[39px] w-[4px] border border-l-0 border-[#b58f88] bg-[#99716a]" />
      <span className="h-[39px] w-[4px] border border-l-0 border-[#b58f88] bg-[#99716a]" />
      <button type="button" aria-label="Chrome" className={`${task} ml-[3px] w-[54px] border-[#fff] bg-[#b4958f]`}>
        <ChromeLogo colors={['#db4437', '#0f9d58', '#ffcd40', '#4285f4']} />
      </button>
      <span className="h-[39px] w-[5px] border border-l-0 border-white bg-[#b4958f]" />

      <div className="ml-auto flex items-center gap-2">
        <svg viewBox="0 0 8 5" className="mr-1 h-[5px] w-2" fill="#fff"><path d="M4 0l4 5H0z" /></svg>
        <span className="text-[15px] font-black leading-none text-[#f00c0c] [font-family:'Noto_Sans_CJK_TC',sans-serif]">南</span>
        <svg viewBox="0 0 16 16" className="size-4" fill="none" stroke="#fff">
          <path d="M2.500 1v4M5.500 1v4M1 5.500h6v3H1zM4 9v7" strokeWidth="1.500" />
          <path d="M8.500 3.500h6v11h-6zM10 2h3" stroke="#555" strokeWidth="1.500" />
          <path d="M9 8l6 7M15 8l-6 7" stroke="#e01010" strokeWidth="2" />
        </svg>
        <svg viewBox="0 0 16 16" className="size-4" fill="none" stroke="#fff">
          <path d="M1 5h3l4-4v14l-4-4H1z" fill="#fff" />
          <path d="M10 5.500c1 1 1 4 0 5M12 4c2 2 2 6 0 8M14 2.500c3 3 3 8 0 11" />
        </svg>
        <svg viewBox="0 0 16 16" className="size-4">
          <path d="M1.500 1v14" stroke="#fff" strokeWidth="1.500" />
          <path d="M3 2h5l2 2h4v7H9L8 9H3z" fill="#fff" />
          <circle cx="11.500" cy="11" r="4.500" fill="#e02020" />
          <path d="M9.500 9l4 4M13.500 9l-4 4" stroke="#fff" strokeWidth="1.500" />
        </svg>
        <svg viewBox="0 0 16 16" className="size-4" fill="none" stroke="#fff" strokeWidth="1.300">
          <path d="M6 4.500h9v7H6M10.500 12v3M7 15h7M1 1h4v4H1zM3 5v10h3" />
        </svg>
        <div className="ml-[6px] text-center text-[11px] leading-[17px] [font-family:'Noto_Sans',sans-serif]">
          <div>6:02 PM</div>
          <div>10/25/2019</div>
        </div>
      </div>
      <span className="absolute bottom-0 right-0 h-2 w-4 bg-[#f3e6e4]" />
    </footer>
  );
}

export default function App() {
  return (
    <div className="relative flex min-h-screen flex-col overflow-hidden bg-[#f0f2f7]">
      <BrowserTabs />
      <AddressBar />
      <InputMethodBars />
      <div className="flex flex-1">
        <main className="flex min-w-0 flex-1 flex-col">
          <SiteHeader />
          <div className="flex flex-1">
            <DrawingToolbar />
            <section className="min-w-0 flex-1 pl-[5px]">
              <ChartToolbar />
              <div className="mr-[5px]">
                <div className="flex h-[5px] w-[26px] items-center justify-center border-x border-[#d8dbe2]">
                  <svg viewBox="0 0 6 3" className="h-[3px] w-[6px]" fill="#c4c6cc"><path d="M3 0l3 3H0z" /></svg>
                </div>
                <div className="relative border-x border-t border-[#d8dbe2]">
                  <PriceChart />
                  <ChartLegend />
                  <RangeBar />
                </div>
              </div>
            </section>
          </div>
        </main>
        {/* Page scrollbar */}
        <div className="flex w-[17px] shrink-0 flex-col items-center bg-[#f1f1f1]">
          <svg viewBox="0 0 8 4" className="my-[7px] h-[3px] w-2" fill="#9a9a9a"><path d="M4 0l4 4H0z" /></svg>
          <span className="h-[201px] w-[13px] bg-[#c1c1c1]" />
          <Caret className="mb-[6px] mt-auto text-[#4a4a4a]" />
        </div>
      </div>
      <Taskbar />
    </div>
  );
}
